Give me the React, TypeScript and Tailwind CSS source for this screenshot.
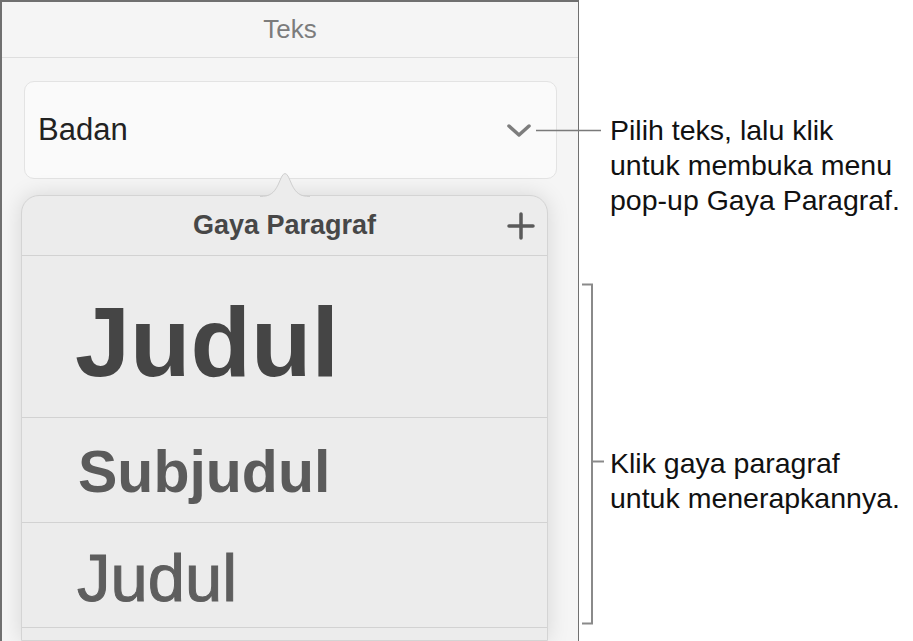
import React from "react";

const font = { fontFamily: '"Liberation Sans", Arial, sans-serif' };

function Chevron() {
  return (
    <svg width="26" height="15" viewBox="0 0 26 15" className="block">
      <path d="M3 3 L13 12 L23 3" fill="none" stroke="#7d7d7d" strokeWidth="3.5" strokeLinecap="round" strokeLinejoin="round" />
    </svg>
  );
}

function Plus() {
  return (
    <svg width="28" height="28" viewBox="0 0 28 28" className="block">
      <path d="M14 2 V26 M2 14 H26" fill="none" stroke="#5a5a5a" strokeWidth="3.5" strokeLinecap="round" />
    </svg>
  );
}

export default function App() {
  return (
    <div className="relative flex w-[913px] h-[641px] bg-white overflow-hidden" style={font}>
      {/* Inspector panel */}
      <div className="w-[579px] shrink-0 h-full border-l-2 border-t-2 border-r border-[#707070] bg-[#f5f5f5] flex flex-col overflow-hidden">
        <div className="h-[56px] shrink-0 border-b border-[#dedede] flex items-center justify-center text-[26px] text-[#7c7c7c]">
          Teks
        </div>
        <div className="ml-[22px] mr-[21px] mt-[23px] h-[98px] shrink-0 rounded-[10px] border border-[#e3e3e3] bg-[#fafafa] flex items-center justify-between pl-[13px] pr-[24px]">
          <span className="text-[31px] text-[#222222]">Badan</span>
          <Chevron />
        </div>
        <div className="relative ml-[19px] mr-[30px] mt-[16px] flex-1 rounded-t-[18px] border border-[#d4d4d4] bg-[#ececec] shadow-[0_0_22px_rgba(0,0,0,0.13)] flex flex-col">
          <svg width="50" height="27" viewBox="0 0 50 27" className="absolute left-[238px] top-[-26px] block">
            <path
              d="M0 27 C10 27 14 23 18 15 L21.5 7 Q25 0 28.5 7 L32 15 C36 23 40 27 50 27 Z"
              fill="#ececec"
              stroke="none"
            />
            <path
              d="M0 26.5 C10 26.5 14 23 18 15 L21.5 7 Q25 0 28.5 7 L32 15 C36 23 40 26.5 50 26.5"
              fill="none"
              stroke="#cfcfcf"
              strokeWidth="1"
            />
          </svg>
          <div className="relative h-[60px] shrink-0 border-b border-[#d2d2d2] flex items-center justify-center">
            <span className="text-[27px] font-bold text-[#474747]">Gaya Paragraf</span>
            <div className="absolute right-[12px] top-[16px]">
              <Plus />
            </div>
          </div>
          <div className="h-[162px] shrink-0 border-b border-[#d2d2d2] flex items-center pl-[53px] pt-[10px]">
            <span className="text-[99px] leading-none font-bold text-[#454545]">Judul</span>
          </div>
          <div className="h-[105px] shrink-0 border-b border-[#d2d2d2] flex items-center pl-[56px] pt-[4px]">
            <span className="text-[59px] leading-none font-bold text-[#5b5b5b]">Subjudul</span>
          </div>
          <div className="h-[105px] shrink-0 border-b border-[#d2d2d2] flex items-center pl-[55px] pt-[4px]">
            <span className="text-[67px] leading-none text-[#5e5e5e]" style={{ WebkitTextStroke: "1px #5e5e5e" }}>
              Judul
            </span>
          </div>
          <div className="flex-1" />
        </div>
      </div>

      {/* Callouts */}
      <div className="flex-1 flex flex-col pl-[31px] pt-[113px] text-[28.5px] leading-[35px] text-[#111111] whitespace-nowrap">
        <div>
          <div>Pilih teks, lalu klik</div>
          <div>untuk membuka menu</div>
          <div>pop-up Gaya Paragraf.</div>
        </div>
        <div className="mt-[228px]">
          <div>Klik gaya paragraf</div>
          <div>untuk menerapkannya.</div>
        </div>
      </div>

      {/* Leader lines */}
      <svg width="913" height="641" className="absolute left-0 top-0 pointer-events-none">
        <line x1="536" y1="130.5" x2="601" y2="130.5" stroke="#7a7a7a" strokeWidth="1.6" />
        <path d="M582 284.5 H592 V623.5 H582" fill="none" stroke="#8a8a8a" strokeWidth="2" />
        <line x1="592" y1="461.5" x2="604" y2="461.5" stroke="#8a8a8a" strokeWidth="2" />
      </svg>
    </div>
  );
}
